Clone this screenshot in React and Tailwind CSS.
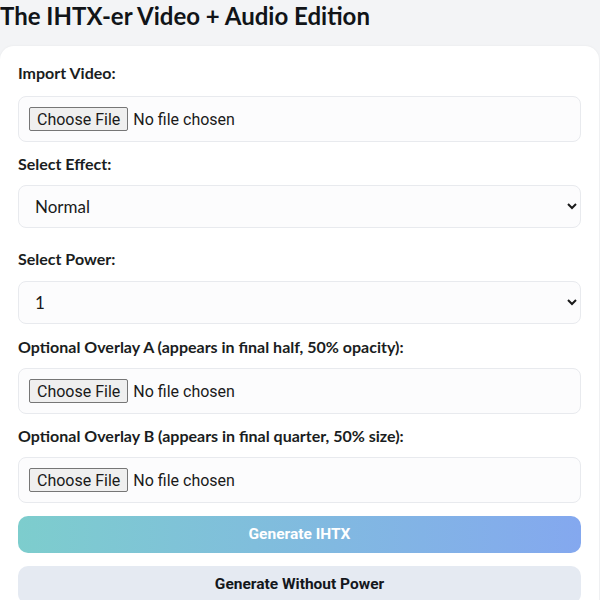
import React from "react";

const labelCls =
  "block text-[16px] leading-[22px] font-bold text-[#1a1d21] font-['Lato',sans-serif]";

function FileBox() {
  return (
    <div className="w-full h-[46px] rounded-[8px] border border-[#e8eaee] bg-[#fcfcfd] pl-[10px] flex items-center">
      <input
        type="file"
        className="text-[16px] text-[#1a1a1a] font-['Roboto',sans-serif] file:mr-[5px] file:h-[24px] file:px-[7px] file:border file:border-solid file:border-[#767676] file:rounded-[2px] file:bg-[#efefef] file:text-[#1a1a1a] file:font-['Roboto',sans-serif] file:text-[16px]"
      />
    </div>
  );
}

function SelectBox({ value, options }) {
  return (
    <select
      defaultValue={value}
      className="w-full h-[43px] rounded-[8px] border border-[#e8eaee] bg-[#fcfcfd] pl-[12px] pr-[6px] text-[17px] text-[#1a1a1a] font-['Lato',sans-serif]"
    >
      {options.map((o) => (
        <option key={o}>{o}</option>
      ))}
    </select>
  );
}

export default function App() {
  return (
    <div className="w-[600px] h-[600px] overflow-hidden bg-[#f3f4f6]">
      <h1 className="h-[46px] pt-[1px] text-[24px] leading-[30px] font-bold text-[#111418] font-['Lato',sans-serif] whitespace-nowrap">
        The IHTX-er Video + Audio Edition
      </h1>
      <div className="w-[599px] bg-white rounded-t-[14px] shadow-[0_0_3px_rgba(0,0,0,0.05)] px-[18px] pt-[16px] pb-[20px]">
        <label className={labelCls + " mb-[12px]"}>Import Video:</label>
        <FileBox />
        <label className={labelCls + " mt-[11px] mb-[10px]"}>Select Effect:</label>
        <SelectBox value="Normal" options={["Normal", "Reverse", "Mirror"]} />
        <label className={labelCls + " mt-[20px] mb-[11px]"}>Select Power:</label>
        <SelectBox value="1" options={["1", "2", "3", "4", "5"]} />
        <label className={labelCls + " mt-[12px] mb-[10px]"}>
          Optional Overlay A (appears in final half, 50% opacity):
        </label>
        <FileBox />
        <label className={labelCls + " mt-[11px] mb-[10px]"}>
          Optional Overlay B (appears in final quarter, 50% size):
        </label>
        <FileBox />
        <button className="mt-[13px] w-full h-[37px] rounded-[10px] bg-gradient-to-r from-[#7dcdcd] to-[#84a8ef] text-white text-[15.5px] font-bold font-['Roboto',sans-serif]">
          Generate IHTX
        </button>
        <button className="mt-[13px] w-full h-[38px] rounded-[10px] bg-[#e5eaf2] text-[#14171c] text-[15.5px] font-bold font-['Roboto',sans-serif]">
          Generate Without Power
        </button>
      </div>
    </div>
  );
}
